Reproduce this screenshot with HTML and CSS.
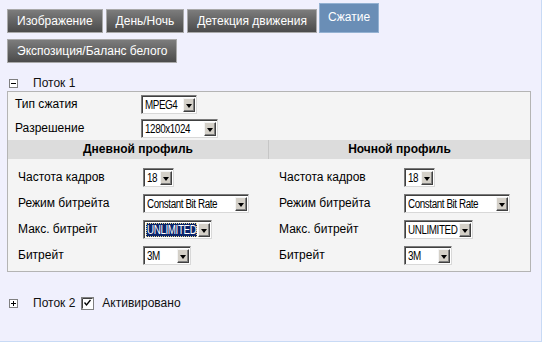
FILE: index.html
```html
<!DOCTYPE html>
<html lang="ru">
<head>
    <meta charset="UTF-8">
    <title>Сжатие</title>
    <link rel="stylesheet" href="styles.css">
</head>
<body>
    <div class="page">
        <div class="tabs">
            <span class="tab">Изображение</span>
            <span class="tab">День/Ночь</span>
            <span class="tab">Детекция движения</span>
            <span class="tab active">Сжатие</span>
        </div>
        <div class="tabs tabs-second">
            <span class="tab">Экспозиция/Баланс белого</span>
        </div>

        <div class="stream-head">
            <svg class="toggle" width="9" height="9" viewBox="0 0 9 9"><rect x="0.5" y="0.5" width="8" height="8" fill="#fff" stroke="#808080"/><path d="M2 4.5h5" stroke="#000"/></svg>
            <span class="stream-name">Поток 1</span>
        </div>

        <div class="panel">
            <div class="row top-row">
                <span class="lbl">Тип сжатия</span>
                <span class="sel sel-codec"><span class="sel-val"><span>MPEG4</span></span><span class="sel-btn"></span></span>
            </div>
            <div class="row top-row">
                <span class="lbl">Разрешение</span>
                <span class="sel sel-res"><span class="sel-val"><span>1280x1024</span></span><span class="sel-btn"></span></span>
            </div>

            <div class="profiles">
                <div class="profile">
                    <div class="phead">Дневной профиль</div>
                    <div class="row">
                        <span class="lbl">Частота кадров</span>
                        <span class="sel sel-fps"><span class="sel-val"><span>18</span></span><span class="sel-btn"></span></span>
                    </div>
                    <div class="row">
                        <span class="lbl">Режим битрейта</span>
                        <span class="sel sel-mode"><span class="sel-val"><span>Constant Bit Rate</span></span><span class="sel-btn"></span></span>
                    </div>
                    <div class="row">
                        <span class="lbl">Макс. битрейт</span>
                        <span class="sel sel-max"><span class="sel-val focus"><span>UNLIMITED</span></span><span class="sel-btn"></span></span>
                    </div>
                    <div class="row">
                        <span class="lbl">Битрейт</span>
                        <span class="sel sel-rate"><span class="sel-val"><span>3M</span></span><span class="sel-btn"></span></span>
                    </div>
                </div>
                <div class="profile night">
                    <div class="phead">Ночной профиль</div>
                    <div class="row">
                        <span class="lbl">Частота кадров</span>
                        <span class="sel sel-fps"><span class="sel-val"><span>18</span></span><span class="sel-btn"></span></span>
                    </div>
                    <div class="row">
                        <span class="lbl">Режим битрейта</span>
                        <span class="sel sel-mode"><span class="sel-val"><span>Constant Bit Rate</span></span><span class="sel-btn"></span></span>
                    </div>
                    <div class="row">
                        <span class="lbl">Макс. битрейт</span>
                        <span class="sel sel-max"><span class="sel-val"><span>UNLIMITED</span></span><span class="sel-btn"></span></span>
                    </div>
                    <div class="row">
                        <span class="lbl">Битрейт</span>
                        <span class="sel sel-rate"><span class="sel-val"><span>3M</span></span><span class="sel-btn"></span></span>
                    </div>
                </div>
            </div>
        </div>

        <div class="stream-head stream-two">
            <svg class="toggle" width="9" height="9" viewBox="0 0 9 9"><rect x="0.5" y="0.5" width="8" height="8" fill="#fff" stroke="#808080"/><path d="M2 4.5h5M4.5 2v5" stroke="#000"/></svg>
            <span class="stream-name">Поток 2</span>
            <svg class="check" width="13" height="13" viewBox="0 0 13 13"><rect x="0.5" y="0.5" width="12" height="12" fill="#fff" stroke="#808080"/><path d="M1.5 1.5v10M1.5 1.5h10" stroke="#404040"/><path d="M3.5 5.5l2 2.5 4-5" fill="none" stroke="#000" stroke-width="1.3"/></svg>
            <span class="stream-name">Активировано</span>
        </div>
    </div>
</body>
</html>
```

FILE: styles.css
```css
body {
    margin: 0;
    background: #fff;
    font-family: "Liberation Sans", Arial, sans-serif;
    font-size: 12px;
    color: #000;
}

.page {
    width: 542px;
    height: 342px;
    background: #f0f0fd;
    border-right: 1px solid #c8daf5;
    border-bottom: 1px solid #c8daf5;
    padding-top: 3px;
    box-sizing: border-box;
}

.tabs {
    display: flex;
    align-items: flex-start;
    gap: 3px;
    padding-left: 7px;
}

.tabs-second {
    margin-top: 6px;
}

.tab {
    margin-top: 6px;
    height: 24px;
    line-height: 22px;
    padding: 0 9px;
    box-sizing: border-box;
    color: #fff;
    background: linear-gradient(#7c7c7c, #4b4b4b);
    border: 1px solid #a9a9a9;
    white-space: nowrap;
}

.tabs-second .tab {
    margin-top: 0;
}

.tab.active {
    margin-top: 0;
    margin-left: -1px;
    height: 30px;
    line-height: 26px;
    padding: 0 8px;
    background: #6a8eb6;
    border-color: #94b2d2;
}

.stream-head {
    display: flex;
    align-items: center;
    height: 14px;
    margin: 13px 0 1px 9px;
}

.toggle {
    margin-right: 15px;
}

.stream-name {
    color: #111;
}

.stream-two {
    margin-top: 24px;
}

.check {
    margin: 0 8px 0 6px;
}

.panel {
    width: 524px;
    margin-left: 7px;
    box-sizing: border-box;
    background: #f4f4f4;
    border: 1px solid #b4b4b4;
}

.row {
    display: flex;
    align-items: center;
    height: 26px;
    padding-left: 10px;
}

.row .lbl {
    width: 125px;
    flex: none;
}

.top-row {
    height: 24px;
    padding-left: 7px;
}

.top-row .lbl {
    width: 126px;
}

.profiles {
    display: grid;
    grid-template-columns: 260px 1fr;
}

.profile {
    padding-bottom: 3px;
}

.night .row {
    padding-left: 11px;
}

.phead {
    height: 19px;
    line-height: 19px;
    margin-bottom: 5px;
    background: #dcdcdc;
    text-align: center;
    font-weight: bold;
}

.night .phead {
    border-left: 1px solid #c6c6c6;
}

.sel {
    display: inline-flex;
    align-items: stretch;
    height: 19px;
    box-sizing: border-box;
    padding: 2px 1px 1px 2px;
    background: #fff;
    border: 1px solid;
    border-color: #7a7a7a #d8d8d8 #d8d8d8 #7a7a7a;
    box-shadow: inset 1px 1px 0 #404040;
}

.sel-val {
    flex: 1;
    min-width: 0;
    margin-right: 1px;
    padding-left: 1px;
    line-height: 14px;
    white-space: nowrap;
    overflow: hidden;
}

.sel-val span {
    display: inline-block;
    letter-spacing: -0.5px;
    transform: scaleX(0.82);
    transform-origin: 0 50%;
}

.sel-val.focus {
    background: #0a246a;
    color: #fff;
    outline: 1px dotted #e8d890;
    outline-offset: -1px;
}

.sel-btn {
    position: relative;
    width: 12px;
    flex: none;
    box-sizing: border-box;
    background: #d4d0c8;
    border: 1px solid;
    border-color: #f4f4f4 #404040 #404040 #f4f4f4;
    box-shadow: inset -1px -1px 0 #808080;
}

.sel-btn::after {
    content: "";
    position: absolute;
    left: 2px;
    top: 5px;
    border-style: solid;
    border-width: 4px 3.5px 0 3.5px;
    border-color: #000 transparent transparent transparent;
}

.sel-codec { width: 56px; }
.sel-res { width: 77px; }
.sel-fps { width: 31px; }
.sel-mode { width: 106px; }
.sel-max { width: 69px; }
.sel-rate { width: 48px; }
```
